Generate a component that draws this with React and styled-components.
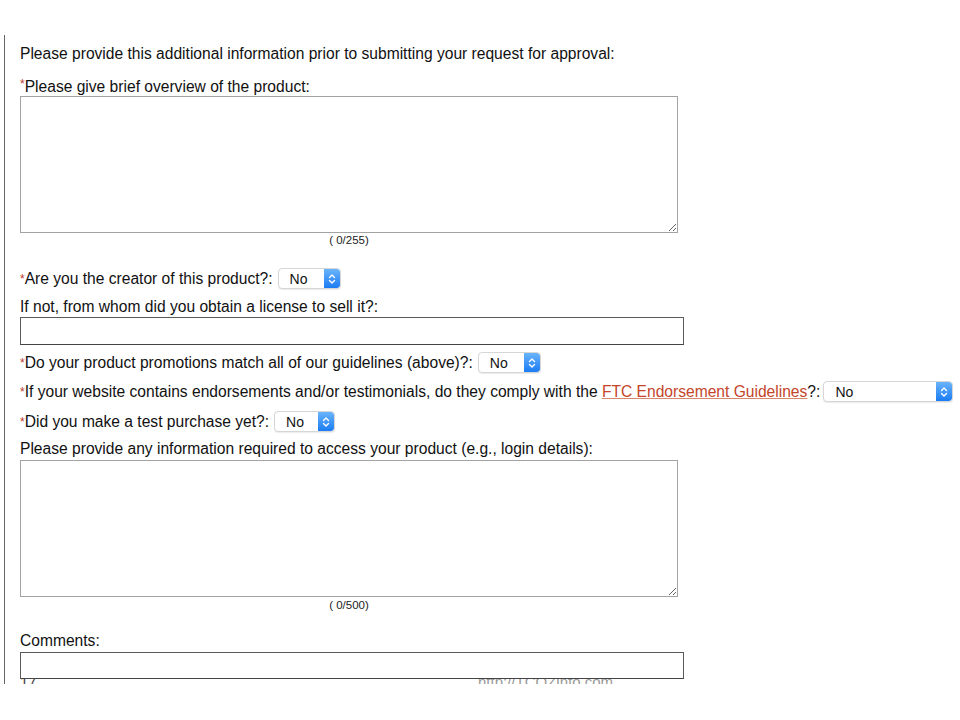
import React from 'react';
import styled, { createGlobalStyle } from 'styled-components';

const GlobalStyle = createGlobalStyle`
  body {
    margin: 0;
    background: #fff;
    font-family: "Liberation Sans", Arial, Helvetica, sans-serif;
    color: #111;
  }
`;

const Page = styled.div`
  width: 960px;
  height: 720px;
  padding-top: 35px;
  box-sizing: border-box;
`;

const Frame = styled.div`
  margin-left: 4px;
  height: 649px;
  border-left: 1px solid #666;
  padding: 10px 0 0 15px;
  box-sizing: border-box;
  overflow: hidden;
`;

const Text = styled.div`
  font-size: 15.6px;
  line-height: 18px;
  margin-top: ${p => p.$mt || 0}px;
  white-space: nowrap;
`;

const Req = styled.span`
  color: #c0392b;
  font-size: 12px;
  line-height: 0;
  vertical-align: 4px;
`;

const Link = styled.a`
  color: #c4452a;
  text-decoration: underline;
  text-decoration-color: #d9866f;
`;

const Area = styled.textarea`
  display: block;
  width: 658px;
  height: 137px;
  margin-top: ${p => p.$mt || 0}px;
  border: 1px solid #a3a3a3;
  box-sizing: border-box;
  font: inherit;
  background: #fff;
  outline: none;
`;

const Counter = styled.div`
  width: 658px;
  text-align: center;
  font-size: 11.5px;
  line-height: 13px;
  margin-top: ${p => p.$mt || 1}px;
  color: #222;
`;

const Input = styled.input`
  display: block;
  position: relative;
  z-index: 1;
  width: 664px;
  height: ${p => p.$h || 28}px;
  margin: ${p => p.$mt || 0}px 0 0;
  border: 1px solid #5a5a5a;
  border-bottom-color: #444;
  box-sizing: border-box;
  background: #fff;
  outline: none;
`;

const Row = styled.div`
  display: flex;
  align-items: center;
  height: 21px;
  margin-top: ${p => p.$mt || 0}px;
  font-size: 15.6px;
  white-space: nowrap;
`;

const SelectBox = styled.div`
  display: flex;
  align-items: stretch;
  width: ${p => p.$w}px;
  height: 21px;
  margin-left: ${p => p.$gap || 4}px;
  border: 1px solid #d6d6d6;
  border-radius: 4px;
  box-sizing: border-box;
  background: #fff;
  box-shadow: 0 1px 1px rgba(0, 0, 0, 0.08);
  overflow: hidden;
`;

const SelectValue = styled.span`
  flex: 1;
  display: flex;
  align-items: center;
  padding-left: 11px;
  font-size: 14px;
  color: #111;
`;

const SelectArrow = styled.span`
  width: 16px;
  display: flex;
  align-items: center;
  justify-content: center;
  background: linear-gradient(#6ab4fb, #1b7cf3);
  border-radius: 0 3px 3px 0;
`;

const Footer = styled.div`
  display: flex;
  align-items: flex-start;
  margin-top: -6px;
  font-size: 15px;
  color: #999;
`;

const PageNum = styled.span`
  width: 458px;
  color: #444;
`;

const Select = ({ w, gap }) => (
  <SelectBox $w={w} $gap={gap}>
    <SelectValue>No</SelectValue>
    <SelectArrow>
      <svg width="8" height="12" viewBox="0 0 8 12" fill="none" stroke="#fff" strokeWidth="1.4" strokeLinecap="round" strokeLinejoin="round">
        <path d="M1.5 4.5 L4 2 L6.5 4.5" />
        <path d="M1.5 7.5 L4 10 L6.5 7.5" />
      </svg>
    </SelectArrow>
  </SelectBox>
);

export default function App() {
  return (
    <Page>
      <GlobalStyle />
      <Frame>
        <Text>Please provide this additional information prior to submitting your request for approval:</Text>
        <Text $mt={15}><Req>*</Req>Please give brief overview of the product:</Text>
        <Area />
        <Counter>( 0/255)</Counter>
        <Row $mt={21}>
          <Req>*</Req>Are you the creator of this product?:
          <Select w={63} gap={5} />
        </Row>
        <Text $mt={9}>If not, from whom did you obtain a license to sell it?:</Text>
        <Input $mt={1} />
        <Row $mt={7}>
          <Req>*</Req>Do your product promotions match all of our guidelines (above)?:
          <Select w={63} gap={5} />
        </Row>
        <Row $mt={8}>
          <Req>*</Req>If your website contains endorsements and/or testimonials, do they comply with the&nbsp;
          <Link>FTC Endorsement Guidelines</Link>?:
          <Select w={130} gap={3} />
        </Row>
        <Row $mt={9}>
          <Req>*</Req>Did you make a test purchase yet?:
          <Select w={61} gap={5} />
        </Row>
        <Text $mt={8}>Please provide any information required to access your product (e.g., login details):</Text>
        <Area $mt={2} />
        <Counter $mt={2}>( 0/500)</Counter>
        <Text $mt={20}>Comments:</Text>
        <Input $mt={2} $h={27} />
        <Footer>
          <PageNum>17</PageNum>
          <span>http://TCOZinfo.com</span>
        </Footer>
      </Frame>
    </Page>
  );
}
